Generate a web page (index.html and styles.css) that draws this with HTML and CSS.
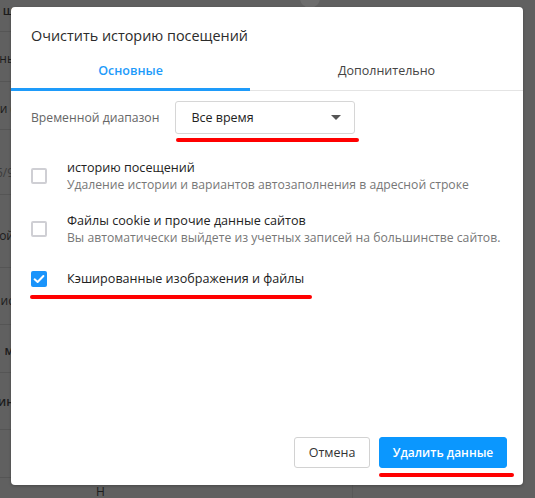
FILE: index.html
```html
<!DOCTYPE html>
<html lang="ru">
<head>
    <meta charset="UTF-8">
    <meta name="viewport" content="width=device-width, initial-scale=1.0">
    <title>Очистить историю посещений</title>
    <link rel="stylesheet" href="styles.css">
</head>
<body>
    <div class="page">
        <div class="page-side">
            <div class="side-row bold r1"><span>щ</span></div>
            <div class="side-row r2"><span>нь</span></div>
            <div class="side-row r3"><span>и (</span></div>
            <div class="side-row light r4"><span>5/9</span></div>
            <div class="side-row r5"><span>ой</span></div>
            <div class="side-row r6"><span>ис</span></div>
            <div class="side-row bold r7"><span>м</span></div>
            <div class="side-row bold r8"><span>ин</span></div>
            <div class="side-row r9"><span>&nbsp;</span></div>
        </div>
        <div class="page-main">
            <div class="page-top"><span class="avatar"></span></div>
            <div class="page-bottom"><span class="page-letter">Н</span></div>
        </div>
    </div>

    <div class="dialog">
        <h1 class="dialog-title">Очистить историю посещений</h1>

        <div class="tabs">
            <div class="tab active">Основные</div>
            <div class="tab">Дополнительно</div>
        </div>

        <div class="dialog-body">
            <div class="range-row">
                <span class="range-label">Временной диапазон</span>
                <div class="select marked">
                    <span>Все время</span>
                    <span class="select-arrow"></span>
                </div>
            </div>

            <div class="option first">
                <span class="checkbox"></span>
                <div class="option-text">
                    <div class="option-title">историю посещений</div>
                    <div class="option-sub">Удаление истории и вариантов автозаполнения в адресной строке</div>
                </div>
            </div>

            <div class="option">
                <span class="checkbox"></span>
                <div class="option-text">
                    <div class="option-title">Файлы cookie и прочие данные сайтов</div>
                    <div class="option-sub">Вы автоматически выйдете из учетных записей на большинстве сайтов.</div>
                </div>
            </div>

            <div class="option last marked">
                <span class="checkbox checked">
                    <svg width="16" height="16" viewBox="0 0 16 16"><path d="M3.6 8.3 L6.6 11 L12.4 5" fill="none" stroke="#fff" stroke-width="2" stroke-linecap="round" stroke-linejoin="round"/></svg>
                </span>
                <div class="option-text">
                    <div class="option-title">Кэшированные изображения и файлы</div>
                </div>
            </div>
        </div>

        <div class="dialog-footer">
            <button class="btn">Отмена</button>
            <button class="btn primary marked">Удалить данные</button>
        </div>
    </div>
</body>
</html>
```

FILE: styles.css
```css
* {
    margin: 0;
    padding: 0;
    box-sizing: border-box;
}

body {
    width: 535px;
    height: 498px;
    overflow: hidden;
    background: #606060;
    font-family: 'Open Sans', 'Noto Sans', sans-serif;
    position: relative;
}

/* page behind the overlay */
.page {
    display: flex;
    height: 100%;
}

.page-side {
    width: 14px;
    flex: none;
    display: flex;
    flex-direction: column;
}

.side-row {
    display: flex;
    align-items: center;
    justify-content: flex-end;
    border-bottom: 1px solid #555;
    font-size: 12px;
    color: #1c1c1c;
    white-space: nowrap;
}

.side-row.r1 { height: 32px; align-items: flex-start; padding-top: 2px; }
.side-row.r2 { height: 50px; padding-top: 4px; }
.side-row.r3 { height: 48px; padding-top: 6px; }
.side-row.r4 { height: 65px; padding-top: 20px; }
.side-row.r5 { height: 73px; padding-top: 8px; }
.side-row.r6 { height: 57px; padding-top: 8px; }
.side-row.r7 { height: 48px; padding-top: 4px; }
.side-row.r8 { height: 57px; }
.side-row.r9 { height: 48px; }

.side-row.bold {
    font-weight: 600;
}

.side-row.light {
    color: #3c3c3c;
}

.page-main {
    flex: 1;
    display: flex;
    flex-direction: column;
    justify-content: space-between;
}

.page-top {
    height: 8px;
    padding-left: 286px;
    overflow: hidden;
}

.avatar {
    display: block;
    width: 20px;
    height: 20px;
    margin-top: -12px;
    border-radius: 50%;
    background: #6c6c6c;
}

.page-bottom {
    height: 13px;
    margin-left: 338px;
    border-left: 1px solid #585858;
    position: relative;
}

.page-letter {
    position: absolute;
    left: -257px;
    top: 0;
    font-size: 12px;
    line-height: 14px;
    color: #1c1c1c;
}

/* dialog */
.dialog {
    position: absolute;
    left: 11px;
    top: 7px;
    width: 512px;
    height: 478px;
    background: #fff;
    border-radius: 4px;
    box-shadow: 0 1px 3px rgba(0, 0, 0, 0.25);
    display: flex;
    flex-direction: column;
}

.dialog-title {
    font-size: 14.4px;
    font-weight: 400;
    color: #2b2b2b;
    line-height: 20px;
    padding: 19px 20px 0;
}

.tabs {
    display: flex;
    height: 40px;
    margin-top: 5px;
    border-bottom: 1px solid #e4e4e4;
}

.tab {
    flex: 1;
    display: flex;
    align-items: center;
    justify-content: center;
    font-size: 12.5px;
    color: #444;
    border-bottom: 3px solid transparent;
    margin-bottom: -1px;
    padding-top: 2px;
}

.tab.active {
    flex: 0 0 239px;
    color: #1e9bfa;
    font-weight: 600;
    border-bottom-color: #1e9bfa;
}

.dialog-body {
    flex: 1;
    padding: 10px 20px 0;
}

.range-row {
    display: flex;
    align-items: center;
    gap: 16px;
}

.range-label {
    font-size: 12.2px;
    color: #666;
}

.select {
    width: 180px;
    height: 33px;
    border: 1px solid #d6d6d6;
    border-radius: 3px;
    display: flex;
    align-items: center;
    justify-content: space-between;
    padding: 0 13px 0 15px;
    font-size: 12.5px;
    color: #222;
}

.select-arrow {
    width: 0;
    height: 0;
    border-left: 5px solid transparent;
    border-right: 5px solid transparent;
    border-top: 5px solid #555;
}

/* red annotation strokes */
.marked {
    position: relative;
}

.marked::after {
    content: "";
    position: absolute;
    height: 4px;
    border-radius: 2px;
    background: #f00;
}

.select.marked::after {
    left: 0;
    right: -5px;
    bottom: -9px;
}

.option {
    display: flex;
    align-items: center;
    gap: 20px;
    margin-top: 19px;
}

.option.first {
    margin-top: 25px;
}

.option.last {
    margin-top: 24px;
}

.option.last::after {
    left: -1px;
    width: 282px;
    bottom: -12px;
}

.checkbox {
    flex: none;
    width: 16px;
    height: 16px;
    border: 2px solid #cfcfd4;
    border-radius: 2px;
}

.checkbox.checked {
    border: none;
    background: #1a94fb;
    border-radius: 2px;
}

.checkbox svg {
    display: block;
}

.option-title {
    font-size: 12.6px;
    line-height: 17px;
    color: #222;
}

.option-sub {
    font-size: 12.2px;
    line-height: 17px;
    color: #777;
}

.dialog-footer {
    display: flex;
    justify-content: flex-end;
    gap: 9px;
    padding: 0 16px 17px;
}

.btn {
    height: 31px;
    border: 1px solid #d2d2d2;
    border-radius: 3px;
    background: #fff;
    font-family: inherit;
    font-size: 12.5px;
    color: #333;
    width: 76px;
}

.btn.primary {
    width: 128px;
    background: #0b97fe;
    border-color: #0b97fe;
    color: #fff;
    font-size: 12px;
    font-weight: 600;
}

.btn.primary::after {
    left: -1px;
    right: -8px;
    bottom: -10px;
}
```
